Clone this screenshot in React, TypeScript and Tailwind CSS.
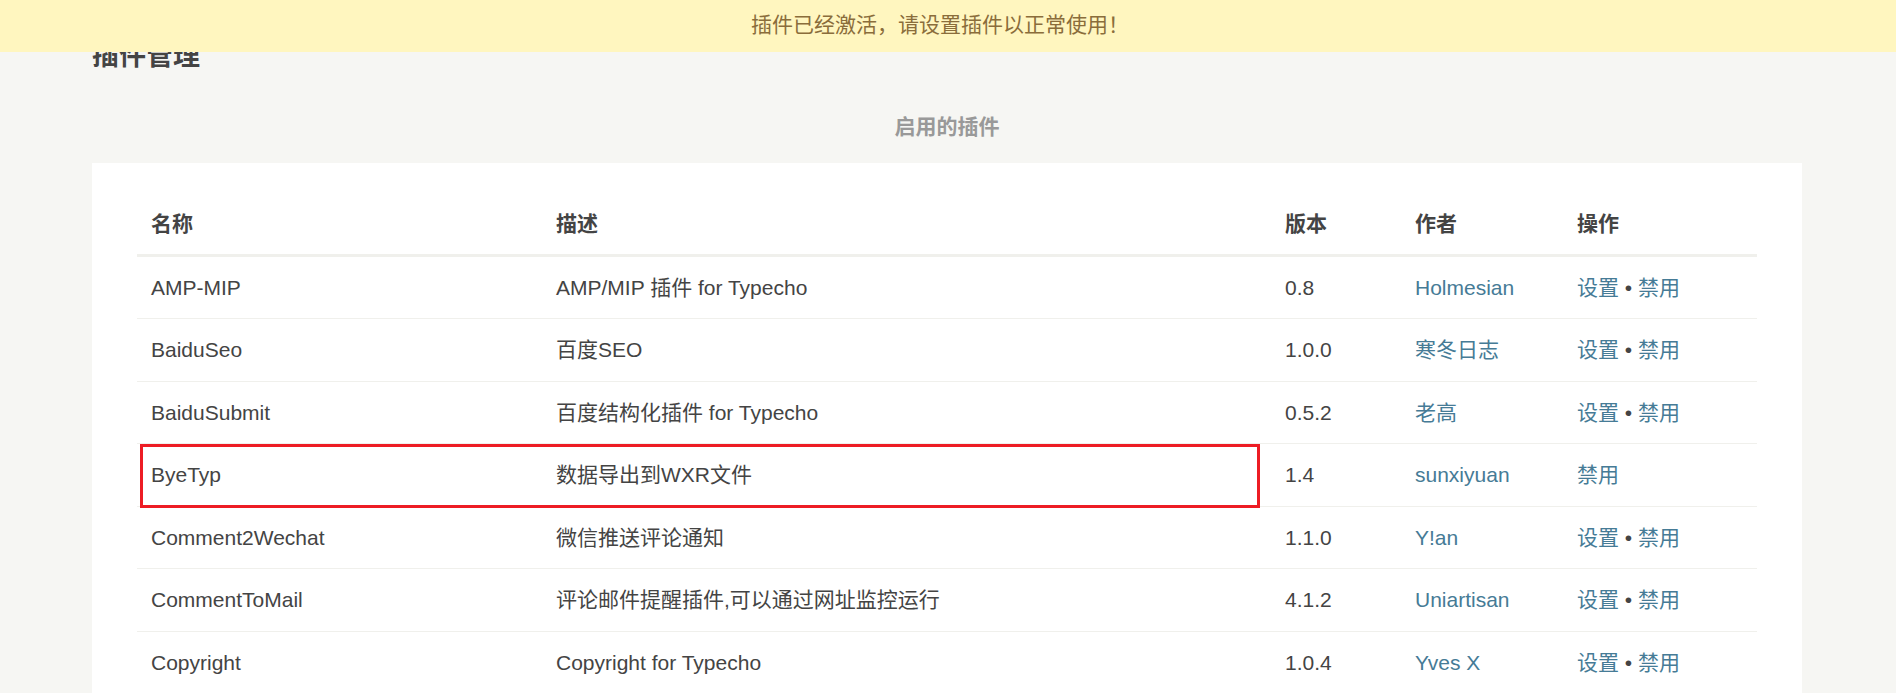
import React from 'react';

interface Plugin {
  name: string;
  desc: string;
  version: string;
  author: string;
  canConfig: boolean;
  marked?: boolean;
}

const plugins: Plugin[] = [
  { name: 'AMP-MIP', desc: 'AMP/MIP 插件 for Typecho', version: '0.8', author: 'Holmesian', canConfig: true },
  { name: 'BaiduSeo', desc: '百度SEO', version: '1.0.0', author: '寒冬日志', canConfig: true },
  { name: 'BaiduSubmit', desc: '百度结构化插件 for Typecho', version: '0.5.2', author: '老高', canConfig: true },
  { name: 'ByeTyp', desc: '数据导出到WXR文件', version: '1.4', author: 'sunxiyuan', canConfig: false, marked: true },
  { name: 'Comment2Wechat', desc: '微信推送评论通知', version: '1.1.0', author: 'Y!an', canConfig: true },
  { name: 'CommentToMail', desc: '评论邮件提醒插件,可以通过网址监控运行', version: '4.1.2', author: 'Uniartisan', canConfig: true },
  { name: 'Copyright', desc: 'Copyright for Typecho', version: '1.0.4', author: 'Yves X', canConfig: true },
];

const cols = 'grid grid-cols-[405px_729px_130px_162px_194px]';

export default function App() {
  return (
    <div
      className="relative h-[693px] overflow-hidden bg-[#F6F6F3] text-[#444]"
      style={{ fontFamily: '"Liberation Sans", Arial, "Noto Sans CJK SC", sans-serif' }}
    >
      <div className="w-[1710px] ml-[92px] pt-[38px]">
        {/* Titulo de pagina */}
        <h2 className="text-[27px] leading-[36px] font-bold text-[#444]">插件管理</h2>

        <h4 className="mt-[38px] text-center text-[21px] leading-[30px] font-bold text-[#999]">
          启用的插件
        </h4>

        {/* Tabla */}
        <div className="mt-[21px] bg-white px-[45px] pt-[30px]">
          <div className={`${cols} h-[64px] items-center border-b-[3px] border-[#F0F0EC] text-[21px] font-bold`}>
            <div className="pl-[14px]">名称</div>
            <div className="pl-[14px]">描述</div>
            <div className="pl-[14px]">版本</div>
            <div className="pl-[14px]">作者</div>
            <div className="pl-[14px]">操作</div>
          </div>

          {plugins.map((p, i) => (
            <div
              key={p.name}
              className={`${cols} relative items-center text-[21px] ${
                i === 0 ? 'h-[61px]' : 'h-[62.5px] border-t border-[#F0F0EC]'
              }`}
            >
              <div className="pl-[14px]">{p.name}</div>
              <div className="pl-[14px]">{p.desc}</div>
              <div className="pl-[14px]">{p.version}</div>
              <div className="pl-[14px] text-[#467B96]">{p.author}</div>
              <div className="pl-[14px]">
                {p.canConfig && (
                  <>
                    <span className="text-[#467B96]">设置</span> •{' '}
                  </>
                )}
                <span className="text-[#467B96]">禁用</span>
              </div>
              {p.marked && (
                <div className="absolute top-0 left-[3px] z-10 w-[1120px] h-[64px] border-[3px] border-[#ED1C24]"></div>
              )}
            </div>
          ))}
        </div>
      </div>

      {/* Aviso superior */}
      <div className="absolute top-0 left-0 right-0 h-[52px] flex items-center justify-center bg-[#FFF6BF] pr-[16px] pb-[2px]">
        <span className="text-[21px] text-[#8A6D3B]">插件已经激活，请设置插件以正常使用！</span>
      </div>
    </div>
  );
}
